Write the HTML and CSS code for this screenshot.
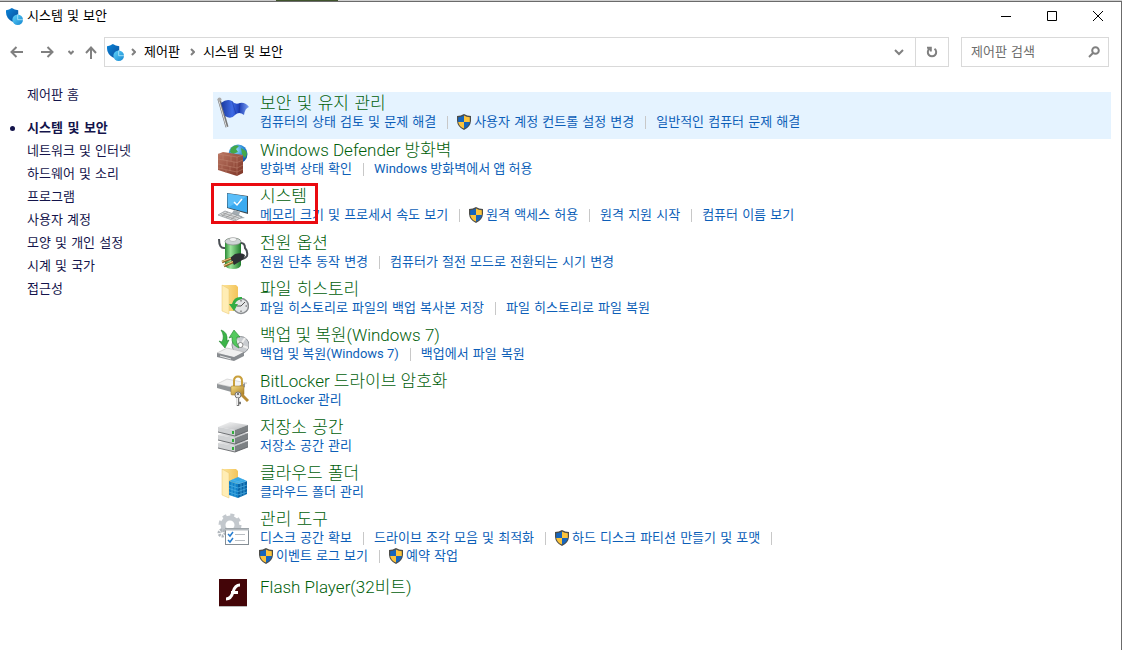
FILE: index.html
```html
<!DOCTYPE html>
<html lang="ko">

<head>
    <meta charset="UTF-8">
    <meta name="viewport" content="width=device-width, initial-scale=1.0">
    <title>시스템 및 보안</title>
    <link rel="stylesheet" href="styles.css">
</head>

<body>
    <!-- 여러 번 쓰는 아이콘 -->
    <svg class="defs" width="0" height="0" aria-hidden="true">
        <defs>
            <linearGradient id="blue" x1="0" y1="0" x2="1" y2="1">
                <stop offset="0" stop-color="#0a84d8"/><stop offset="1" stop-color="#0a4f9c"/>
            </linearGradient>
            <linearGradient id="cyan" x1="0" y1="0" x2="1" y2="1">
                <stop offset="0" stop-color="#5fd3fa"/><stop offset="1" stop-color="#1586d0"/>
            </linearGradient>
            <linearGradient id="flag" x1="0" y1="0" x2="1" y2="0">
                <stop offset="0" stop-color="#1b3a9c"/><stop offset=".4" stop-color="#3f6be6"/><stop offset=".65" stop-color="#1e3fb8"/><stop offset="1" stop-color="#7fa4f4"/>
            </linearGradient>
            <linearGradient id="brick" x1="0" y1="0" x2="1" y2="1">
                <stop offset="0" stop-color="#bb7763"/><stop offset="1" stop-color="#7d3426"/>
            </linearGradient>
            <radialGradient id="globe" cx=".4" cy=".3" r=".8">
                <stop offset="0" stop-color="#9be0fb"/><stop offset=".5" stop-color="#2b8bd8"/><stop offset="1" stop-color="#0c3f8f"/>
            </radialGradient>
            <linearGradient id="green" x1="0" y1="0" x2="1" y2="0">
                <stop offset="0" stop-color="#2a8a35"/><stop offset=".35" stop-color="#9be59a"/><stop offset="1" stop-color="#1f7d2c"/>
            </linearGradient>
            <linearGradient id="metal" x1="0" y1="0" x2="1" y2="1">
                <stop offset="0" stop-color="#fafafa"/><stop offset="1" stop-color="#b5b7ba"/>
            </linearGradient>
            <linearGradient id="folder" x1="0" y1="0" x2="1" y2="0">
                <stop offset="0" stop-color="#fde59c"/><stop offset="1" stop-color="#f3c45a"/>
            </linearGradient>
            <linearGradient id="gold" x1="0" y1="0" x2="1" y2="1">
                <stop offset="0" stop-color="#f5dc82"/><stop offset="1" stop-color="#a87a20"/>
            </linearGradient>
        </defs>
        <symbol id="security" viewBox="0 0 16 16">
            <path d="M0 2Q3 2 5.500 0Q8 2 11.500 2V6Q11 10.500 6 13Q0 9.500 0 4Z" fill="url(#blue)"/>
            <circle cx="11" cy="11" r="5" fill="url(#cyan)"/>
            <path d="M11 6V11H16" fill="none" stroke="#bdeefd" stroke-width=".7"/>
        </symbol>
        <symbol id="uac" viewBox="0 0 16 16">
            <path d="M8 0Q11 2 15 2V7Q14.500 13 8 16Q1.500 13 1 7V2Q5 2 8 0Z" fill="#4c4c48"/>
            <path d="M8 1.500V8H2.200V3.200Q5.500 3 8 1.500Z" fill="#1665bc"/>
            <path d="M8 1.500V8H13.800V3.200Q10.500 3 8 1.500Z" fill="#fcc43c"/>
            <path d="M2.200 8H8V14.600Q3 12.500 2.200 8Z" fill="#fcc43c"/>
            <path d="M13.800 8H8V14.600Q13 12.500 13.800 8Z" fill="#1665bc"/>
        </symbol>
    </svg>

    <div class="desktop"></div>
    <div class="window">
        <header class="titlebar">
            <svg class="app-icon"><use href="#security"/></svg>
            <h1>시스템 및 보안</h1>
            <div class="win-buttons">
                <button type="button" aria-label="최소화"><svg width="10" height="10"><path d="M0 5.500H10"/></svg></button>
                <button type="button" aria-label="최대화"><svg width="10" height="10"><path d="M.5 .5H9.500V9.500H.5Z"/></svg></button>
                <button type="button" aria-label="닫기"><svg width="10" height="10"><path d="M0 0L10 10M10 0L0 10"/></svg></button>
            </div>
        </header>

        <nav class="toolbar" aria-label="주소">
            <div class="history">
                <button type="button" aria-label="뒤로"><svg width="14" height="12"><path d="M13 6H2M6.500 1L1.500 6L6.500 11"/></svg></button>
                <button type="button" aria-label="앞으로"><svg width="14" height="12"><path d="M1 6H12M7.500 1L12.500 6L7.500 11"/></svg></button>
                <button type="button" class="recent" aria-label="최근 위치"><svg width="6" height="5"><path d="M.5 1L3 3.500L5.500 1"/></svg></button>
                <button type="button" class="up" aria-label="위로"><svg width="12" height="14"><path d="M6 14V3M1 8L6 2.500L11 8"/></svg></button>
            </div>
            <div class="address">
                <svg class="app-icon"><use href="#security"/></svg>
                <svg class="arrow" width="5" height="8"><path d="M1 1L4 4L1 7"/></svg>
                <a href="#">제어판</a>
                <svg class="arrow" width="5" height="8"><path d="M1 1L4 4L1 7"/></svg>
                <a href="#">시스템 및 보안</a>
                <button type="button" class="drop" aria-label="이전 위치"><svg width="10" height="7"><path d="M1 1L5 5L9 1"/></svg></button>
                <button type="button" class="refresh" aria-label="새로 고침"><svg width="12" height="12"><path d="M8.500 2.800A4.200 4.200 0 1 1 3.500 2.800M1 1.700H4.800V5.500"/></svg></button>
            </div>
            <div class="search">
                <input type="search" placeholder="제어판 검색" aria-label="제어판 검색">
                <svg width="12" height="12"><circle cx="7.500" cy="4.500" r="3.300"/><path d="M5 7L1 11"/></svg>
            </div>
        </nav>

        <div class="content">
            <aside class="sidebar">
                <a href="#" class="home">제어판 홈</a>
                <ul>
                    <li class="current"><a href="#">시스템 및 보안</a></li>
                    <li><a href="#">네트워크 및 인터넷</a></li>
                    <li><a href="#">하드웨어 및 소리</a></li>
                    <li><a href="#">프로그램</a></li>
                    <li><a href="#">사용자 계정</a></li>
                    <li><a href="#">모양 및 개인 설정</a></li>
                    <li><a href="#">시계 및 국가</a></li>
                    <li><a href="#">접근성</a></li>
                </ul>
            </aside>

            <main class="list">
                <section class="item active">
                    <svg class="icon" viewBox="0 0 32 32">
                        <path d="M2 2L10 30" stroke="#777" stroke-width="3"/>
                        <path d="M1.500 2L9.500 30" stroke="#ddd"/>
                        <circle cx="2.500" cy="2.500" r="2" fill="#aaa"/>
                        <path d="M4 6Q10 1 15 4Q18 8 23 6Q28 5 32 10Q28 11 27 18Q22 14 18 18Q14 23 8 19Z" fill="url(#flag)"/>
                        <path d="M15 4L19 17M23 6L22 16" stroke="#132e8a" opacity=".4"/>
                    </svg>
                    <div>
                        <h2><a href="#">보안 및 유지 관리</a></h2>
                        <ul class="links">
                            <li><a href="#">컴퓨터의 상태 검토 및 문제 해결</a></li>
                            <li class="admin"><svg><use href="#uac"/></svg><a href="#">사용자 계정 컨트롤 설정 변경</a></li>
                            <li><a href="#">일반적인 컴퓨터 문제 해결</a></li>
                        </ul>
                    </div>
                </section>

                <section class="item">
                    <svg class="icon" viewBox="0 0 32 32">
                        <circle cx="21" cy="10" r="9.500" fill="url(#globe)"/>
                        <path d="M14 4Q18 0 22 2L19 5L21 8L16 10L13 8ZM24 4L29 7Q31 10 28 14L25 10Z" fill="#43a84a"/>
                        <path d="M1 10L6 8L26 11V29L20 32L1 26Z" fill="url(#brick)"/>
                        <path d="M1 10L20 13L26 11M20 13V32M1 15L20 18.500L26 16M1 20L20 24L26 21M1 24L20 28L26 25M6 11V16M14 12V17M10 16V22M17 18V23M5 21V25M13 22V27M9 26V29" fill="none" stroke="#c08672" stroke-width=".5"/>
                    </svg>
                    <div>
                        <h2 class="latin"><a href="#">Windows Defender 방화벽</a></h2>
                        <ul class="links">
                            <li><a href="#">방화벽 상태 확인</a></li>
                            <li class="latin"><a href="#">Windows 방화벽에서 앱 허용</a></li>
                        </ul>
                    </div>
                </section>

                <section class="item marked">
                    <svg class="icon" viewBox="0 0 32 32">
                        <path d="M10 3L31 6V24L10 18Z" fill="#3c4850"/>
                        <path d="M10.500 3.500L30 6.500V22.500L10.500 17.500Z" fill="#3aaaf0"/>
                        <path d="M10.500 3.500L30 6.500L11 17.500Z" fill="#72cbff" opacity=".6"/>
                        <path d="M17 12L20 15L25 9" fill="none" stroke="#fff" stroke-width="1.500"/>
                        <path d="M17 20L23 22L22 25L28 28L20 29L13 26Z" fill="#a4adb3"/>
                        <path d="M1 25L8 21L25 27L18 31Z" fill="#d8dadb" stroke="#8d9296" stroke-width=".7"/>
                        <path d="M4 24.500L19 29.500M6 23L22 28M5 26L11 22M9 27.500L15 24M14 29L20 25.500" stroke="#888" stroke-width=".6"/>
                    </svg>
                    <div>
                        <h2><a href="#">시스템</a></h2>
                        <ul class="links">
                            <li><a href="#">메모리 크기 및 프로세서 속도 보기</a></li>
                            <li class="admin"><svg><use href="#uac"/></svg><a href="#">원격 액세스 허용</a></li>
                            <li><a href="#">원격 지원 시작</a></li>
                            <li><a href="#">컴퓨터 이름 보기</a></li>
                        </ul>
                    </div>
                </section>

                <section class="item">
                    <svg class="icon" viewBox="0 0 32 32">
                        <path d="M8 11Q2 12 2 2M24 6Q28 6 28 11Q31 14 30 19Q28 22 24 22" fill="none" stroke="#4a4f54" stroke-width="2"/>
                        <path d="M8 5Q8 1 16 1T24 5V28Q23 32 16 32T8 28Z" fill="url(#green)"/>
                        <ellipse cx="16" cy="4.500" rx="8" ry="3.500" fill="#cfd4d6" stroke="#888" stroke-width=".7"/>
                        <ellipse cx="16" cy="2.500" rx="3.500" ry="2" fill="#f4f5f5" stroke="#999" stroke-width=".5"/>
                        <path d="M13 21L18 17Q25 15 28 18Q27 23 22 25L17 28Z" fill="#2d3034"/>
                        <path d="M14 21.500L5 25M16 25L7 29" stroke="#8a6526" stroke-width="2.500"/>
                        <path d="M14 21L5 24.500M16 24.500L7 28.500" stroke="#f0cd85"/>
                    </svg>
                    <div>
                        <h2><a href="#">전원 옵션</a></h2>
                        <ul class="links">
                            <li><a href="#">전원 단추 동작 변경</a></li>
                            <li><a href="#">컴퓨터가 절전 모드로 전환되는 시기 변경</a></li>
                        </ul>
                    </div>
                </section>

                <section class="item">
                    <svg class="icon" viewBox="0 0 32 32">
                        <path d="M5 2H19L21 4V28H5Z" fill="url(#folder)"/>
                        <path d="M5 2L12 6V31L5 28Z" fill="#ffedb5" stroke="#eac66f" stroke-width=".5"/>
                        <circle cx="24" cy="23" r="7.500" fill="#e3e5e6" stroke="#8a8d90" stroke-width="1.500"/>
                        <path d="M28 19L24 23H20M24 17V18.500M24 29V27.500M30 23H28.500" fill="none" stroke="#555"/>
                        <path d="M25 14Q17 13 15 21H12L17 28L21 21H18Q19 17 25 16Z" fill="#32ad45"/>
                    </svg>
                    <div>
                        <h2><a href="#">파일 히스토리</a></h2>
                        <ul class="links">
                            <li><a href="#">파일 히스토리로 파일의 백업 복사본 저장</a></li>
                            <li><a href="#">파일 히스토리로 파일 복원</a></li>
                        </ul>
                    </div>
                </section>

                <section class="item">
                    <svg class="icon" viewBox="0 0 32 32">
                        <circle cx="23.500" cy="16" r="8.500" fill="#c9ccd0" stroke="#909498"/>
                        <path d="M23.500 16L28 9M23.500 16L31 19M23.500 16L19 10" stroke="#eee" stroke-width="2"/>
                        <circle cx="23.500" cy="16" r="2.500" fill="#fff" stroke="#888"/>
                        <path d="M0 24L10 19L27 23L17 29Z" fill="#f0f0f0" stroke="#aaa" stroke-width=".5"/>
                        <path d="M0 24L17 28V32L0 28ZM17 28L27 23V27L17 32Z" fill="#888c90"/>
                        <path d="M3 27L14 30" stroke="#e5e5e5"/>
                        <path d="M4 1Q11 3 10 12L12 11L8 19L2 12L5 13Q8 7 4 1Z" fill="#3cb549" stroke="#21862e" stroke-width=".6"/>
                        <path d="M17 1L23 8L20 8Q18 13 22 19Q14 16 15 8L12 9Z" fill="#54ca5e" stroke="#21862e" stroke-width=".6"/>
                    </svg>
                    <div>
                        <h2 class="latin"><a href="#">백업 및 복원(Windows 7)</a></h2>
                        <ul class="links">
                            <li class="latin"><a href="#">백업 및 복원(Windows 7)</a></li>
                            <li><a href="#">백업에서 파일 복원</a></li>
                        </ul>
                    </div>
                </section>

                <section class="item">
                    <svg class="icon" viewBox="0 0 32 32">
                        <path d="M0 9L10 4L30 8L20 13Z" fill="#f3f3f3" stroke="#bbb" stroke-width=".5"/>
                        <path d="M0 9L18 13V18L0 13ZM18 13L28 8V12L18 18Z" fill="#919598"/>
                        <path d="M17 12V6Q17 1.500 21 1.500T25 6V12" fill="none" stroke="#c9a03c" stroke-width="2"/>
                        <rect x="14" y="11" width="13" height="9" rx="1" fill="url(#gold)" stroke="#997126" stroke-width=".5"/>
                        <path d="M24 19L31 26" stroke="#b98c33" stroke-width="3"/>
                        <circle cx="21" cy="20" r="3" fill="#e8e8e8" stroke="#777"/>
                        <path d="M21 23V31M21 28H24" stroke="#777" stroke-width="2.500"/>
                        <path d="M20.500 23V30" stroke="#eee"/>
                        <circle cx="21" cy="19" r="1" fill="#555"/>
                    </svg>
                    <div>
                        <h2 class="latin"><a href="#">BitLocker 드라이브 암호화</a></h2>
                        <ul class="links">
                            <li class="latin"><a href="#">BitLocker 관리</a></li>
                        </ul>
                    </div>
                </section>

                <section class="item">
                    <svg class="icon" viewBox="0 0 32 32">
                        <g id="disk">
                            <path d="M1 22L13 17L31 20L18 25Z" fill="url(#metal)"/>
                            <path d="M1 22L18 25V31L1 27Z" fill="#d0d2d4"/>
                            <path d="M18 25L31 20V26L18 31Z" fill="#7d8184"/>
                            <path d="M1 27L18 31L31 26" fill="none" stroke="#55585c" stroke-width=".8"/>
                            <path d="M16 26V29" stroke="#31ad3c" stroke-width="2"/>
                        </g>
                        <use href="#disk" y="-8"/>
                        <use href="#disk" y="-16"/>
                    </svg>
                    <div>
                        <h2><a href="#">저장소 공간</a></h2>
                        <ul class="links">
                            <li><a href="#">저장소 공간 관리</a></li>
                        </ul>
                    </div>
                </section>

                <section class="item">
                    <svg class="icon" viewBox="0 0 32 32">
                        <path d="M5 2H19L21 4V28H5Z" fill="url(#folder)"/>
                        <path d="M5 2L12 6V31L5 28Z" fill="#ffedb5" stroke="#eac66f" stroke-width=".5"/>
                        <path d="M12 14L21 17V31L12 28Z" fill="#1180c8"/>
                        <path d="M21 17L30 14V27L21 31Z" fill="#0965a8"/>
                        <path d="M12 14L21 10L30 14L21 17Z" fill="#37a8e6"/>
                        <path d="M12 18L21 21L30 18M12 21.500L21 24.500L30 21.500M12 25L21 28L30 25M15 15V29M18 16V30M24 16V30M27 15V28.500M15 12.500L24 16M18 16L27 12.500" fill="none" stroke="#59b9ea" stroke-width=".6"/>
                    </svg>
                    <div>
                        <h2><a href="#">클라우드 폴더</a></h2>
                        <ul class="links">
                            <li><a href="#">클라우드 폴더 관리</a></li>
                        </ul>
                    </div>
                </section>

                <section class="item">
                    <svg class="icon" viewBox="0 0 32 32">
                        <circle cx="13" cy="12" r="7" fill="none" stroke="#c3c8cd" stroke-width="5"/>
                        <circle cx="13" cy="12" r="10" fill="none" stroke="#c3c8cd" stroke-width="3" stroke-dasharray="4 3.850"/>
                        <circle cx="5" cy="20" r="3" fill="none" stroke="#b0b6bc" stroke-width="3" stroke-dasharray="2 1"/>
                        <rect x="8.500" y="15.500" width="23" height="16" fill="#fff" stroke="#858d94"/>
                        <path d="M8 16.500H32" stroke="#b4babf" stroke-width="2"/>
                        <path d="M11 21L13 23L16 19M11 27L13 29L16 25" fill="none" stroke="#267dd0" stroke-width="1.500"/>
                        <path d="M18 21.500H28M18 27.500H28" stroke="#b9bec3"/>
                    </svg>
                    <div>
                        <h2><a href="#">관리 도구</a></h2>
                        <ul class="links wrapped">
                            <li><a href="#">디스크 공간 확보</a></li>
                            <li><a href="#">드라이브 조각 모음 및 최적화</a></li>
                            <li class="admin"><svg><use href="#uac"/></svg><a href="#">하드 디스크 파티션 만들기 및 포맷</a></li>
                        </ul>
                        <ul class="links">
                            <li class="admin"><svg><use href="#uac"/></svg><a href="#">이벤트 로그 보기</a></li>
                            <li class="admin"><svg><use href="#uac"/></svg><a href="#">예약 작업</a></li>
                        </ul>
                    </div>
                </section>

                <section class="item single">
                    <svg class="icon" viewBox="0 0 32 32">
                        <rect x="2" y="3" width="28" height="27" fill="#bbb"/>
                        <rect x="2" y="2" width="28" height="27" fill="#430508"/>
                        <path d="M23 8Q18 8 16 15Q14 22 9 22" fill="none" stroke="#fff" stroke-width="3"/>
                        <path d="M14 15.500H21" stroke="#fff" stroke-width="3"/>
                    </svg>
                    <div>
                        <h2 class="latin"><a href="#">Flash Player(32비트)</a></h2>
                    </div>
                </section>
            </main>
        </div>
    </div>
</body>

</html>
```
FILE: styles.css
```css
*, *::before, *::after {
    box-sizing: border-box;
}

body {
    display: flex;
    flex-direction: column;
    min-height: 100vh;
    margin: 0;
    background-color: #fff;
    color: #000;
    font-family: "DejaVu Sans", "Noto Sans CJK KR", sans-serif;
    font-size: 13px;
    line-height: 18px;
}

h1, h2, ul {
    margin: 0;
    padding: 0;
    font-weight: inherit;
    list-style: none;
}

a {
    color: inherit;
    text-decoration: none;
}

button {
    display: flex;
    align-items: center;
    justify-content: center;
    padding: 0;
    border: 0;
    background: none;
}

button svg, .arrow, .search svg {
    fill: none;
    stroke: #808080;
    stroke-width: 2;
}

.defs {
    position: absolute;
}

/* 창 뒤로 보이는 바탕 */
.desktop {
    height: 1px;
    background: linear-gradient(to right, #c8c8c8 276px, #40542c 276px, #40542c 338px, #d0d0d0 338px);
}

.window {
    flex: 1;
    border-top: 1px solid #6b6b6b;
    border-right: 1px solid #6b6b6b;
}

/* 제목 표시줄 */
.titlebar {
    display: flex;
    align-items: center;
    height: 28px;
    padding-left: 6px;
}

.app-icon {
    flex: none;
    width: 17px;
    height: 17px;
}

.titlebar h1 {
    flex: 1;
    margin-left: 4px;
    font-size: 13px;
}

.win-buttons {
    display: flex;
}

.win-buttons button {
    width: 46px;
    height: 28px;
}

.win-buttons svg {
    stroke: #000;
    stroke-width: 1;
}

/* 주소 표시줄 */
.toolbar {
    display: flex;
    align-items: center;
    padding: 7px 12px 0 8px;
}

.history {
    display: flex;
    align-items: center;
    width: 96px;
}

.history button {
    width: 30px;
    height: 30px;
    margin-left: -6px;
    margin-right: 6px;
}

.history .recent {
    width: 14px;
    margin: 0 0 0 -4px;
}

.history .up {
    width: 16px;
    margin: 0 0 0 5px;
}

.address {
    display: flex;
    flex: 1;
    align-items: center;
    height: 30px;
    padding-left: 2px;
    border: 1px solid #d9d9d9;
}

.address a {
    margin-right: 3px;
}

.arrow {
    flex: none;
    margin: 0 8px 0 7px;
}

.address .drop {
    width: 32px;
    height: 28px;
    margin-left: auto;
}

.address .refresh {
    width: 33px;
    height: 28px;
    border-left: 1px solid #d9d9d9;
}

.search {
    display: flex;
    align-items: center;
    width: 148px;
    height: 30px;
    margin-left: 12px;
    padding: 0 8px 0 9px;
    border: 1px solid #d9d9d9;
}

.search input {
    flex: 1;
    min-width: 0;
    padding: 0;
    border: 0;
    outline: 0;
    background: none;
    font: inherit;
}

.search input::placeholder {
    color: #6d6d6d;
}

/* 본문 */
.content {
    display: flex;
    padding: 25px 10px 0 0;
}

.sidebar {
    flex: none;
    width: 213px;
    padding: 0 0 0 27px;
    color: #14144b;
    line-height: 23px;
}

.home {
    display: block;
    margin: -9px 0 10px;
}

.sidebar .current {
    position: relative;
    font-weight: bold;
}

.sidebar .current::before {
    content: "";
    position: absolute;
    left: -17px;
    top: 10px;
    width: 5px;
    height: 5px;
    border-radius: 50%;
    background-color: #14144b;
}

.list {
    flex: 1;
    min-width: 0;
}

.item {
    display: flex;
    gap: 11px;
    min-height: 46px;
    padding: 1px 4px 4px;
}

.item.active,
.item.marked {
    min-height: 47px;
}

.item.active {
    background-color: #e5f3ff;
}

.icon {
    flex: none;
    width: 32px;
    height: 32px;
    margin-top: 4px;
}

.item h2 {
    height: 20px;
    color: #00600a;
    font-size: 17px;
    font-weight: 300;
    line-height: 20px;
}

.links {
    display: flex;
    color: #0d5fb8;
}

.links li {
    display: flex;
    align-items: center;
    height: 18px;
}

.latin {
    font-family: Roboto, "Noto Sans CJK KR", sans-serif;
}

/* 링크 사이 구분선 */
.links li:not(:last-child)::after,
.wrapped li:last-child::after {
    content: "";
    width: 1px;
    height: 13px;
    margin: 0 10px 0 11px;
    background-color: #c8c8c8;
}

.admin svg {
    width: 16px;
    height: 16px;
    margin: 0 2px 0 -2px;
}

.single {
    padding-top: 8px;
}

.single .icon {
    margin-top: 0;
}

/* 빨간 강조 상자 */
.marked {
    position: relative;
}

.marked::after {
    content: "";
    position: absolute;
    left: -2px;
    top: -2px;
    width: 107px;
    height: 41px;
    border: 3px solid #ea0a10;
}
```
